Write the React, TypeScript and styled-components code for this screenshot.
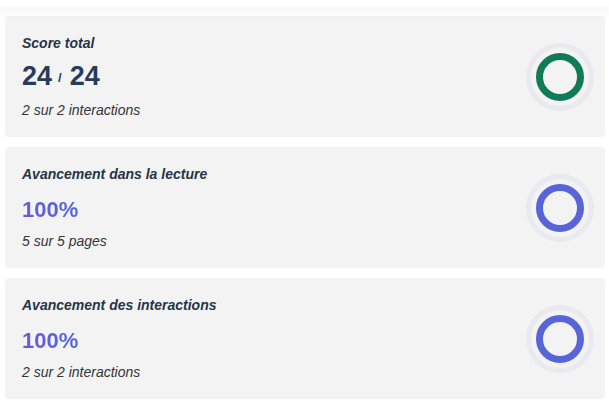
import styled, { createGlobalStyle } from "styled-components";

const GlobalStyle = createGlobalStyle`
  html, body {
    margin: 0;
    padding: 0;
    background: #ffffff;
    font-family: "Liberation Sans", Arial, sans-serif;
  }
`;

const Page = styled.div`
  width: 609px;
  padding: 0 4px 0 5px;
  box-sizing: border-box;
`;

const TopShade = styled.div`
  position: relative;
  z-index: 1;
  height: 7px;
  margin: 0 -4px 0 -5px;
  background: #ffffff;
  box-shadow: 0 3px 14px rgba(0, 0, 0, 0.08);
`;

const List = styled.div`
  display: flex;
  flex-direction: column;
  gap: 10px;
  padding-top: 9px;
`;

const Card = styled.div`
  display: flex;
  align-items: center;
  justify-content: space-between;
  height: 121px;
  box-sizing: border-box;
  padding: 0 11px 0 17px;
  background: #f3f3f3;
  border-radius: 4px;
`;

const Info = styled.div`
  display: flex;
  flex-direction: column;
`;

const Title = styled.div`
  font-size: 14px;
  line-height: 20px;
  font-weight: bold;
  font-style: italic;
  color: #263448;
`;

const ValueRow = styled.div`
  display: flex;
  align-items: flex-end;
  height: 30px;
  margin-top: 7px;
`;

const Score = styled.span`
  font-size: 27px;
  line-height: 1;
  font-weight: bold;
  color: #283b58;
`;

const Slash = styled.span`
  font-size: 13px;
  margin: 0 8px 0 6px;
  vertical-align: 0.2em;
`;

const Percent = styled.span`
  font-size: 22px;
  line-height: 1;
  font-weight: bold;
  background: linear-gradient(90deg, #6b5ad6, #5066dc);
  -webkit-background-clip: text;
  background-clip: text;
  color: transparent;
`;

const Detail = styled.div`
  margin-top: 10px;
  font-size: 14px;
  line-height: 20px;
  font-style: italic;
  color: #353535;
`;

const Halo = styled.div`
  display: flex;
  align-items: center;
  justify-content: center;
  width: 68px;
  height: 68px;
  box-sizing: border-box;
  border: 5px solid #e9e9f0;
  border-radius: 50%;
`;

const Ring = styled.div<{ $color: string }>`
  width: 48px;
  height: 48px;
  box-sizing: border-box;
  border: 7px solid ${(p) => p.$color};
  border-radius: 50%;
`;

const GREEN = "#117b56";
const BLUE = "#5865d9";

const App = () => {
  return (
    <>
      <GlobalStyle />
      <Page>
        <TopShade />
        <List>
          <Card>
            <Info>
              <Title>Score total</Title>
              <ValueRow>
                <Score>
                  24<Slash>/</Slash>24
                </Score>
              </ValueRow>
              <Detail>2 sur 2 interactions</Detail>
            </Info>
            <Halo>
              <Ring $color={GREEN} />
            </Halo>
          </Card>
          <Card>
            <Info>
              <Title>Avancement dans la lecture</Title>
              <ValueRow>
                <Percent>100%</Percent>
              </ValueRow>
              <Detail>5 sur 5 pages</Detail>
            </Info>
            <Halo>
              <Ring $color={BLUE} />
            </Halo>
          </Card>
          <Card>
            <Info>
              <Title>Avancement des interactions</Title>
              <ValueRow>
                <Percent>100%</Percent>
              </ValueRow>
              <Detail>2 sur 2 interactions</Detail>
            </Info>
            <Halo>
              <Ring $color={BLUE} />
            </Halo>
          </Card>
        </List>
      </Page>
    </>
  );
};

export default App;
